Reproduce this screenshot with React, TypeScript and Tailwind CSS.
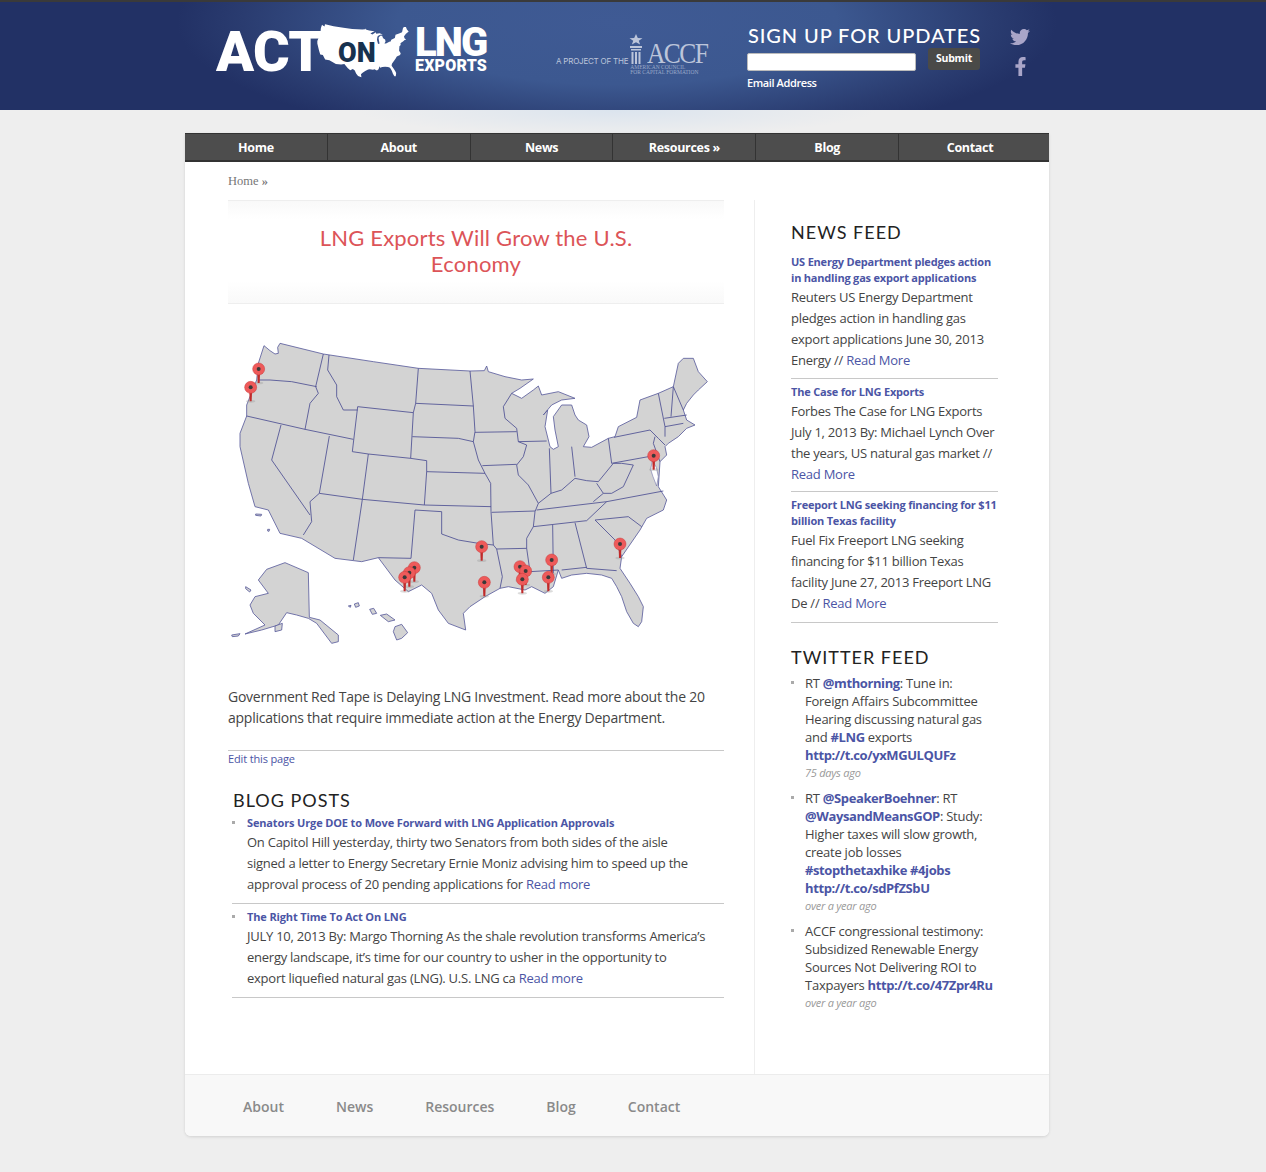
import React from 'react';
import { FaTwitter, FaFacebookF } from 'react-icons/fa';

const usOutline =
  'M117 47L135 62L150 72L160 70L158 52L165 40L295 72L445 95L580 115L735 123L778 122L785 108L790 125L840 140L890 150L925 147L885 175L860 190L890 205L925 180L940 168L950 195L1000 185L1050 205L1010 210L980 225L955 255L968 240L960 290L975 350L985 358L1000 350L990 300L985 260L1010 225L1040 225L1050 255L1060 270L1085 285L1092 320L1075 350L1100 352L1150 325L1170 320L1180 290L1235 262L1245 210L1300 190L1345 170L1360 100L1375 85L1405 85L1420 125L1447 155L1420 180L1405 195L1385 220L1375 240L1385 270L1410 285L1385 295L1360 320L1330 340L1320 350L1325 375L1305 395L1300 470L1325 510L1315 540L1265 565L1245 600L1190 680L1185 715L1215 760L1240 800L1255 830L1250 875L1240 890L1225 880L1205 845L1190 800L1175 770L1160 745L1130 735L1085 730L1040 735L1010 745L1000 720L985 770L960 790L920 770L900 780L850 770L825 775L780 800L735 830L715 850L722 900L670 880L640 840L620 790L590 765L550 785L510 750L460 683L410 695L330 685L230 625L165 610L130 540L90 530L70 460L45 350L45 310L65 258L65 225L95 150L100 100Z';

const stateLines = [
  'M100 150L135 150L200 155L275 170',
  'M295 72L272 170L280 190L255 220L240 298',
  'M65 258L240 298L385 328',
  'M312 75L308 120L335 165L335 200L355 240L398 240',
  'M398 230L382 365L430 372L557 385',
  'M398 230L565 248',
  'M580 115L572 220L565 248L557 385L605 392L605 425L598 525',
  'M313 318L283 490L412 508L598 525L798 530',
  'M168 285L140 390L255 555',
  'M283 490L255 515L260 575L235 615',
  'M430 372L412 508L385 690',
  'M570 540L558 685L460 683',
  'M570 540L650 545L650 612L700 630L760 640L805 645',
  'M605 425L780 430',
  'M562 320L700 325L745 335L760 390L780 430L797 460L798 545L805 645L815 657L832 740L825 775',
  'M572 220L745 228',
  'M735 123L745 228L750 305L745 335',
  'M750 307L875 305',
  'M772 407L875 403',
  'M880 335L905 345L895 380L875 405L880 435L910 465L940 520L930 545L925 590L905 625L905 655L915 725L1000 720',
  'M860 190L835 230L840 265L875 295L880 335L965 333',
  'M800 547L930 543',
  'M815 657L905 655',
  'M983 585L985 730',
  'M925 590L1085 572L1145 515',
  'M935 540L1145 515L1315 483',
  'M1110 570L1210 560L1250 590',
  'M1110 570L1170 630L1190 680',
  'M1050 578L1085 715L1175 722',
  'M1010 720L1085 712',
  'M973 355L978 490L940 520',
  'M1040 350L1050 440',
  'M978 490L1010 480L1050 445L1085 452L1120 455L1165 400L1190 400L1225 405L1195 470L1160 490L1135 490L1105 515',
  'M1115 460L1135 490',
  'M1150 325L1160 400L1270 380',
  'M1167 322L1275 300L1300 325L1320 345',
  'M1300 190L1320 290L1320 320',
  'M1345 170L1338 260',
  'M1345 170L1375 240',
  'M1318 265L1385 255',
  'M1320 290L1375 280',
  'M1290 320L1285 340L1305 395',
];

const alaska =
  'M125 718L180 698L250 728L253 862L285 870L340 915L340 935L320 940L275 880L250 865L215 855L185 848L160 885L110 900L60 912L120 885L85 850L75 825L90 800L130 790L100 750Z';

const islands = [
  'M388 822L400 818L403 828L392 832Z',
  'M370 828L378 826L376 832Z',
  'M434 838L446 835L455 850L442 853Z',
  'M466 856L485 852L510 870L490 875Z',
  'M510 890L530 883L548 908L530 925L515 930L505 905Z',
  'M20 915L45 911L40 918L22 920Z',
  'M62 770L78 780L74 786L62 776Z',
  'M150 888L172 880L170 900L150 905Z',
  'M92 552L110 553L108 558L92 556Z',
  'M128 598L134 598L132 604L128 603Z',
];

const pins: [number, number][] = [
  [101, 117], [77, 172], [568, 713], [553, 728], [539, 742], [770, 650], [778, 757],
  [885, 710], [902, 723], [892, 748], [980, 690], [970, 742], [1185, 642], [1286, 377],
];

const UsMap = () => (
  <svg width="500" height="320" viewBox="0 0 1500 960" className="block">
    <path d={usOutline} fill="#d3d3d3" stroke="#5a5d9c" strokeWidth="2.5" strokeLinejoin="round" />
    {stateLines.map((d, i) => (
      <path key={i} d={d} fill="none" stroke="#4a4d92" strokeWidth="2.5" strokeLinejoin="round" />
    ))}
    <path d={alaska} fill="#d3d3d3" stroke="#5a5d9c" strokeWidth="2.5" strokeLinejoin="round" />
    {islands.map((d, i) => (
      <path key={i} d={d} fill="#d3d3d3" stroke="#5a5d9c" strokeWidth="2.5" strokeLinejoin="round" />
    ))}
    <path d="M1282 392L1277 418L1284 440L1295 468L1300 440L1294 412Z" fill="#fff" stroke="#5a5d9c" strokeWidth="1.5" />
    {pins.map(([x, y], i) => (
      <g key={i}>
        <ellipse cx={x} cy={y + 42} rx="14" ry="4" fill="#999" opacity="0.35" />
        <path d={`M${x - 4} ${y + 14}L${x - 3} ${y + 42}L${x + 3} ${y + 42}L${x + 4} ${y + 14}Z`} fill="#c02a2a" />
        <circle cx={x} cy={y} r="18" fill="#ee5a5a" stroke="#c93c3c" strokeWidth="1.5" />
        <circle cx={x} cy={y} r="6" fill="#3a3a3a" />
      </g>
    ))}
  </svg>
);

const ActOnLogo = () => (
  <div className="flex items-start text-white" style={{ fontFamily: 'Roboto, sans-serif' }}>
    <div className="w-[101px] mt-[2px] text-[56px] leading-[50px] font-black tracking-[-0.6px]">ACT</div>
    <div className="relative h-[56px] w-[92px] mt-[-1px]">
      <svg width="92" height="56" viewBox="40 35 1412 910" preserveAspectRatio="none" className="block">
        <path d={usOutline} fill="#fff" />
      </svg>
      <span className="absolute left-[21px] top-[14px] text-[27px] leading-[30px] font-black text-[#17324f]">ON</span>
    </div>
    <div className="ml-[6px] mt-[-1px] flex flex-col">
      <span className="text-[40px] leading-[37px] font-black tracking-[-1.9px]">LNG</span>
      <span className="text-[16px] leading-[15px] font-black tracking-[0.2px] mt-[-3px]">EXPORTS</span>
    </div>
  </div>
);

const AccfLogo = () => (
  <div className="flex items-start text-[#bcc5da]">
    <span className="text-[8px] leading-[10px] mt-[22px] mr-[1px] whitespace-nowrap tracking-[-0.22px]" style={{ fontFamily: 'Inter, sans-serif' }}>
      A PROJECT OF THE
    </span>
    <div className="flex flex-col">
      <div className="flex items-end">
        <svg width="14" height="31" viewBox="0 0 14 31" className="block">
          <path d="M7 0L8.8 4L13.5 4.2L9.8 6.7L11.1 10.6L7 8.3L2.9 10.6L4.2 6.7L.5 4.2L5.2 4Z" fill="#bcc5da" />
          <path d="M1 12H13V14H1ZM2 15H12V16.5H2ZM2.5 18H4.5V30H2.5ZM6 18H8V30H6ZM9.5 18H11.5V30H9.5Z" fill="#bcc5da" />
        </svg>
        <span className="ml-[4px] inline-block origin-left scale-x-[0.88] text-[29px] leading-[24px] tracking-[-1.8px]" style={{ fontFamily: '"Liberation Serif", serif' }}>
          ACCF
        </span>
      </div>
      <span className="text-[5.5px] leading-[5px] ml-[1px] whitespace-nowrap text-[#9aa9c9]" style={{ fontFamily: '"Liberation Serif", serif' }}>
        AMERICAN COUNCIL
        <br />
        FOR CAPITAL FORMATION
      </span>
    </div>
  </div>
);

const navItems = ['Home', 'About', 'News', 'Resources »', 'Blog', 'Contact'];

const newsFeed = [
  {
    title: 'US Energy Department pledges action in handling gas export applications',
    body: 'Reuters US Energy Department pledges action in handling gas export applications June 30, 2013 Energy //',
    pad: 'pb-[7px]',
  },
  {
    title: 'The Case for LNG Exports',
    body: 'Forbes The Case for LNG Exports July 1, 2013 By: Michael Lynch Over the years, US natural gas market //',
    pad: 'pb-[6px]',
  },
  {
    title: 'Freeport LNG seeking financing for $11 billion Texas facility',
    body: 'Fuel Fix Freeport LNG seeking financing for $11 billion Texas facility June 27, 2013 Freeport LNG De //',
    pad: 'pb-[8px]',
  },
];

const blogPosts = [
  {
    title: 'Senators Urge DOE to Move Forward with LNG Application Approvals',
    body: 'On Capitol Hill yesterday, thirty two Senators from both sides of the aisle signed a letter to Energy Secretary Ernie Moniz advising him to speed up the approval process of 20 pending applications for',
  },
  {
    title: 'The Right Time To Act On LNG',
    body: 'JULY 10, 2013 By: Margo Thorning As the shale revolution transforms America’s energy landscape, it’s time for our country to usher in the opportunity to export liquefied natural gas (LNG). U.S. LNG ca',
  },
];

const Heading = ({ children, className }: { children: React.ReactNode; className?: string }) => (
  <h3
    className={`text-[18px] leading-[24px] tracking-[1px] text-[#222] uppercase ${className}`}
    style={{ fontFamily: 'Lato, sans-serif' }}
  >
    {children}
  </h3>
);

const Bullet = () => <span className="absolute left-0 top-[7px] h-[3px] w-[3px] bg-[#aaa]" />;

const B = ({ children }: { children: React.ReactNode }) => (
  <b className="font-bold tracking-[-0.4px] text-[#4b55a5]">{children}</b>
);

export default function App() {
  return (
    <div
      className="min-h-[1172px] bg-[#eeeeee] text-[#444]"
      style={{ fontFamily: '"Open Sans", sans-serif' }}
    >
      <header className="h-[110px] border-t-2 border-[#3a3a3a] bg-[radial-gradient(ellipse_440px_125px_at_617px_20px,#3f5a94_0%,#3c5890_50%,#2a3c70_85%,#223165_100%)] pl-[216px] flex items-start relative">
        <div className="w-[340px] pt-[23px]">
          <ActOnLogo />
        </div>
        <div className="w-[191px] pt-[32px]">
          <AccfLogo />
        </div>
        <div className="w-[263px] pt-[20px] text-white">
          <div className="text-[20px] leading-[26px] tracking-[0.9px] pl-[1px] font-medium" style={{ fontFamily: 'Lato, sans-serif' }}>
            SIGN UP FOR UPDATES
          </div>
          <div className="flex items-start mt-[1px]">
            <input className="mt-[4px] h-[18px] w-[169px] rounded-[2px] border border-[#bbb] bg-white" />
            <button className="ml-[12px] mt-[-1px] h-[22px] w-[52px] rounded-[3px] bg-[#4a4a48] text-[10.5px] font-bold tracking-[-0.2px] text-white">
              Submit
            </button>
          </div>
          <div className="text-[11px] font-semibold tracking-[-0.4px] mt-[4px] leading-[16px]">Email Address</div>
        </div>
        <div className="flex flex-col items-center pt-[25px] text-[#a9a5c8]">
          <FaTwitter size={20} />
          <FaFacebookF size={19} className="mt-[10px]" />
        </div>
      </header>

      <div className="h-[23px] bg-[radial-gradient(ellipse_260px_26px_at_617px_0px,#dbe4ee_0%,#eeeeee_100%)]" />

      <div className="ml-[185px] w-[864px] rounded-b-[6px] bg-white shadow-[0_1px_3px_rgba(0,0,0,0.12)]">
        <nav className="h-[29px] border-t border-b-2 border-[#333] bg-[#4d4d4d]">
          <div className="flex h-full w-[856px]">
            {navItems.map((item, i) => (
              <div
                key={item}
                className={`flex flex-1 items-center justify-center pt-[2px] text-[12.5px] font-bold tracking-[-0.3px] text-white ${i > 0 ? 'border-l border-[#333]' : ''}`}
              >
                {item}
              </div>
            ))}
          </div>
        </nav>

        <div className="h-[38px] pl-[43px] pt-[10px] text-[12.5px] leading-[18px] text-[#777]" style={{ fontFamily: '"Liberation Serif", serif' }}>
          Home <span className="font-bold">»</span>
        </div>

        <div className="flex h-[874px]">
          <main className="w-[570px] pl-[43px] pr-[30px] border-r border-[#eee]">
            <div className="h-[104px] border-y border-[#eeeeee] bg-[linear-gradient(#f9f9f9,#ffffff_18%,#ffffff_78%,#f9f9f9)] pt-[24px] text-center">
              <h1 className="mx-auto w-[330px] text-[22px] leading-[26px] tracking-[0.2px] text-[#dc5458]" style={{ fontFamily: 'Lato, sans-serif' }}>
                LNG Exports Will Grow the U.S. Economy
              </h1>
            </div>
            <div className="mt-[26px] -ml-[3px]">
              <UsMap />
            </div>
            <p className="mt-[36px] text-[14px] leading-[21px] tracking-[-0.25px] text-[#444]">
              Government Red Tape is Delaying LNG Investment. Read more about the 20 applications that require immediate
              action at the Energy Department.
            </p>
            <div className="mt-[22px] border-t border-[#c8c8c8] text-[11px] leading-[16px] tracking-[-0.15px] text-[#4b55a5]">
              Edit this page
            </div>
            <div className="ml-[4px] mt-[21px]">
              <div className="pl-[1px]">
                <Heading>Blog Posts</Heading>
              </div>
              <ul className="mt-[2px]">
                {blogPosts.map(p => (
                  <li key={p.title} className="relative border-b border-[#c8c8c8] pb-[8px] mb-[4px] pl-[15px] pr-[17px]">
                    <Bullet />
                    <div className="text-[11px] leading-[18px] font-bold tracking-[-0.14px] text-[#4b55a5]">{p.title}</div>
                    <p className="text-[13px] leading-[21px] tracking-[-0.25px] text-[#444]">
                      {p.body} <span className="text-[#4b55a5]">Read more</span>
                    </p>
                  </li>
                ))}
              </ul>
            </div>
          </main>

          <aside className="w-[294px] pl-[36px] pr-[51px] pt-[20px]">
            <Heading>News Feed</Heading>
            <div className="mt-[5px]">
              {newsFeed.map(n => (
                <div key={n.title} className={`border-b border-[#c8c8c8] pt-[5px] ${n.pad}`}>
                  <div className="text-[11px] leading-[16px] font-bold tracking-[-0.2px] text-[#4b55a5]">{n.title}</div>
                  <p className="text-[13px] leading-[21px] tracking-[-0.25px] text-[#444] mt-[1px]">
                    {n.body} <span className="text-[#4b55a5]">Read More</span>
                  </p>
                </div>
              ))}
            </div>
            <Heading className="mt-[22px]">Twitter Feed</Heading>
            <ul className="mt-[5px] text-[13px] leading-[18px] tracking-[-0.25px] text-[#444]">
              <li className="relative pl-[14px] mb-[7px]">
                <Bullet />
                RT <B>@mthorning</B>: Tune in: Foreign Affairs Subcommittee Hearing discussing natural gas and <B>#LNG</B> exports <B>http://t.co/yxMGULQUFz</B>
                <div className="text-[11px] italic text-[#999]">75 days ago</div>
              </li>
              <li className="relative pl-[14px] mb-[7px]">
                <Bullet />
                RT <B>@SpeakerBoehner</B>: RT <B>@WaysandMeansGOP</B>: Study: Higher taxes will slow growth, create job losses <B>#stopthetaxhike</B> <B>#4jobs</B> <B>http://t.co/sdPfZSbU</B>
                <div className="text-[11px] italic text-[#999]">over a year ago</div>
              </li>
              <li className="relative pl-[14px]">
                <Bullet />
                ACCF congressional testimony: Subsidized Renewable Energy Sources Not Delivering ROI to Taxpayers <B>http://t.co/47Zpr4Ru</B>
                <div className="text-[11px] italic text-[#999]">over a year ago</div>
              </li>
            </ul>
          </aside>
        </div>

        <footer className="flex h-[62px] items-center gap-[52px] rounded-b-[6px] border-t border-[#ececec] bg-[#f8f8f8] pl-[58px] pt-[2px] text-[14px] font-semibold text-[#8a8a8a]">
          <span>About</span>
          <span>News</span>
          <span>Resources</span>
          <span>Blog</span>
          <span>Contact</span>
        </footer>
      </div>
    </div>
  );
}
